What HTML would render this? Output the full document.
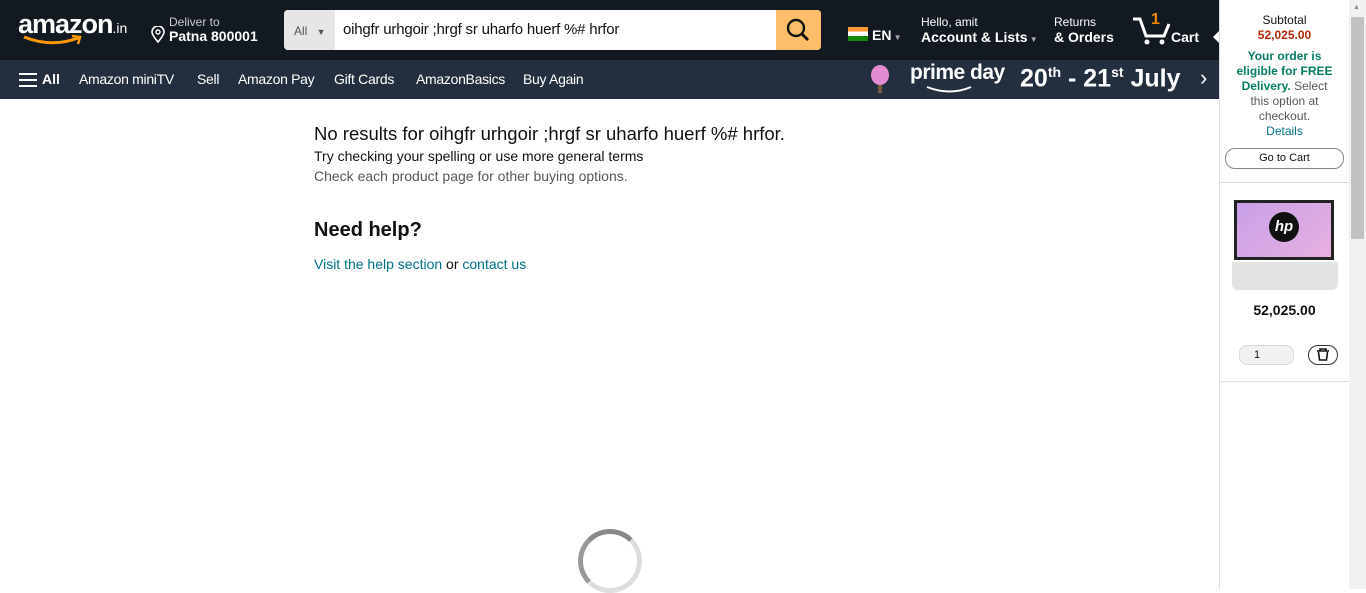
<!DOCTYPE html>
<html><head><meta charset="utf-8"><style>
*{box-sizing:border-box;margin:0;padding:0}
body{width:1366px;height:589px;overflow:hidden;font-family:"Liberation Sans",sans-serif;background:#fff;position:relative;color:#0f1111}
.top{position:absolute;left:0;top:0;width:1219px;height:60px;background:#131921;color:#fff}
.sub{position:absolute;left:0;top:60px;width:1219px;height:39px;background:#232f3e;color:#fff}
.a{position:absolute;white-space:nowrap}
.sm{font-size:12px}.bd{font-size:14px;font-weight:bold}
.nav span{position:absolute;top:11px;font-size:14px;font-weight:bold}
.nav span.n{font-weight:normal;letter-spacing:-0.3px}
.side{position:absolute;left:1219px;top:0;width:130px;height:589px;border-left:1px solid #ddd;background:#fff;text-align:center;font-size:12px}
.sb{position:absolute;left:1349px;top:0;width:17px;height:589px;background:#f1f1f1}
</style></head><body>
<div class="top">
 <div class="a" style="left:18px;top:9px;font-size:27px;font-weight:bold;letter-spacing:-1px">amazon<span style="font-size:14px;font-weight:normal;letter-spacing:0">.in</span></div>
 <svg class="a" style="left:22px;top:34px" width="62" height="14"><path d="M2 3 Q30 14 56 4" stroke="#ff9900" stroke-width="3" fill="none"/><path d="M50 2 L58 3 L56 10" stroke="#ff9900" stroke-width="2.5" fill="none"/></svg>
 <svg class="a" style="left:151px;top:26px" width="14" height="18"><path d="M7 16 C2 10 1 7 1 6 A6 6 0 0 1 13 6 C13 7 12 10 7 16Z" stroke="#fff" stroke-width="1.6" fill="none"/><circle cx="7" cy="6" r="2" stroke="#fff" stroke-width="1.4" fill="none"/></svg>
 <div class="a sm" style="left:169px;top:15px;color:#ccc">Deliver to</div>
 <div class="a bd" style="left:169px;top:28px">Patna 800001</div>
 <div class="a" style="left:284px;top:10px;width:537px;height:40px;background:#fff;border-radius:4px;overflow:hidden">
  <div class="a" style="left:0;top:0;width:51px;height:40px;background:#e6e6e6;color:#555;font-size:12px;padding:14px 0 0 10px">All <span style="font-size:9px;margin-left:6px">▼</span></div>
  <div class="a" style="left:59px;top:11px;font-size:15px;color:#111;letter-spacing:-0.2px">oihgfr urhgoir ;hrgf sr uharfo huerf %# hrfor</div>
  <div class="a" style="left:492px;top:0;width:45px;height:40px;background:#febd69"><svg width="45" height="40"><circle cx="20" cy="18" r="8" stroke="#111" stroke-width="2.4" fill="none"/><path d="M26 24 L32 30" stroke="#111" stroke-width="2.8"/></svg></div>
 </div>
 <div class="a" style="left:848px;top:27px;width:20px;height:14px;background:linear-gradient(#f93 0 33%,#fff 33% 66%,#138808 66%)"></div>
 <div class="a bd" style="left:872px;top:27px">EN<span style="font-size:8px;color:#aaa"> ▼</span></div>
 <div class="a sm" style="left:921px;top:15px">Hello, amit</div>
 <div class="a bd" style="left:921px;top:29px">Account &amp; Lists<span style="font-size:8px;color:#aaa"> ▼</span></div>
 <div class="a sm" style="left:1054px;top:15px">Returns</div>
 <div class="a bd" style="left:1054px;top:29px">&amp; Orders</div>
 <svg class="a" style="left:1132px;top:16px" width="40" height="30"><path d="M1 3 L8 3 L14 20 L32 20 L37 8" stroke="#fff" stroke-width="3" fill="none"/><circle cx="15" cy="26" r="2.5" fill="#fff"/><circle cx="30" cy="26" r="2.5" fill="#fff"/></svg>
 <div class="a" style="left:1151px;top:11px;color:#f08804;font-weight:bold;font-size:16px">1</div>
 <div class="a bd" style="left:1171px;top:29px">Cart</div>
 <div class="a" style="left:1207px;top:31px;width:0;height:0;border:6px solid transparent;border-right-color:#fff"></div>
</div>
<div class="sub nav">
 <svg class="a" style="left:19px;top:12px" width="20" height="16"><path d="M0 2H18M0 8H18M0 14H18" stroke="#fff" stroke-width="2"/></svg>
 <span style="left:42px">All</span>
 <span class="n" style="left:79px">Amazon miniTV</span>
 <span class="n" style="left:197px">Sell</span>
 <span class="n" style="left:238px">Amazon Pay</span>
 <span class="n" style="left:334px">Gift Cards</span>
 <span class="n" style="left:416px">AmazonBasics</span>
 <span class="n" style="left:523px">Buy Again</span>
 <div class="a" style="left:871px;top:5px;width:18px;height:20px;border-radius:50%;background:#e58bd3"></div>
 <div class="a" style="left:878px;top:25px;width:4px;height:8px;background:#7a5a3a"></div>
 <div class="a" style="left:910px;top:1px;font-size:21px;font-weight:bold;letter-spacing:-0.5px">prime day</div>
 <svg class="a" style="left:925px;top:24px" width="50" height="12"><path d="M2 3 Q25 12 46 3" stroke="#fff" stroke-width="2" fill="none"/></svg>
 <div class="a" style="left:1020px;top:4px;font-size:25px;font-weight:bold">20<sup style="font-size:14px">th</sup> - 21<sup style="font-size:14px">st</sup> July</div>
 <div class="a" style="left:1200px;top:5px;font-size:22px">›</div>
</div>
<div class="a" style="left:314px;top:123px;font-size:18.5px">No results for oihgfr urhgoir ;hrgf sr uharfo huerf %# hrfor.</div>
<div class="a" style="left:314px;top:148px;font-size:14px">Try checking your spelling or use more general terms</div>
<div class="a" style="left:314px;top:168px;font-size:14px;color:#565959">Check each product page for other buying options.</div>
<div class="a" style="left:314px;top:219px;font-size:20px;font-weight:bold">Need help?</div>
<div class="a" style="left:314px;top:256px;font-size:14px;color:#007185">Visit the help section <span style="color:#0f1111">or</span> contact us</div>
<div class="a" style="left:578px;top:529px;width:64px;height:64px;border-radius:50%;border:5px solid #ddd;border-top-color:#888;border-left-color:#999"></div>
<div class="side">
 <div style="margin-top:13px;font-size:12px;line-height:15px">Subtotal</div>
 <div style="color:#b12704;font-weight:bold;line-height:15px">52,025.00</div>
 <div style="margin-top:6px;color:#067d62;font-weight:bold;line-height:15px;padding:0 14px">Your order is eligible for FREE Delivery. <span style="color:#565959;font-weight:normal">Select this option at checkout.</span></div>
 <div style="color:#007185;line-height:15px">Details</div>
 <div style="margin:9px auto 0;width:119px;height:21px;border:1px solid #888;border-radius:10px;font-size:11px;line-height:19px">Go to Cart</div>
 <div style="position:absolute;left:0;top:182px;width:129px;border-top:1px solid #ddd"></div>
 <div style="position:absolute;left:12px;top:200px;width:106px;height:90px">
  <div style="position:absolute;left:2px;top:0;width:100px;height:60px;background:linear-gradient(135deg,#c8a0e8,#e8b0e0);border:3px solid #222"></div>
  <div style="position:absolute;left:37px;top:12px;width:30px;height:30px;border-radius:50%;background:#111;color:#fff;font-weight:bold;font-style:italic;font-size:15px;line-height:30px">hp</div>
  <div style="position:absolute;left:0;top:62px;width:106px;height:28px;background:#e3e3e3;border-radius:0 0 6px 6px"></div>
 </div>
 <div style="position:absolute;left:0;top:302px;width:129px;font-size:14px;font-weight:bold">52,025.00</div>
 <div style="position:absolute;left:19px;top:345px;width:55px;height:20px;background:#f0f2f2;border:1px solid #d5d9d9;border-radius:8px;text-align:left;padding-left:14px;line-height:18px;font-size:11px">1</div>
 <div style="position:absolute;left:88px;top:345px;width:30px;height:20px;border:1px solid #333;border-radius:10px"><svg width="28" height="18"><path d="M8 5H20M11 5V3H17V5M9.5 6L10.5 14H17.5L18.5 6" stroke="#111" stroke-width="1.6" fill="none"/></svg></div>
 <div style="position:absolute;left:0;top:381px;width:129px;border-top:1px solid #ddd"></div>
</div>
<div class="sb"><div style="position:absolute;left:2px;top:17px;width:13px;height:222px;background:#c1c1c1"></div><div style="position:absolute;left:4px;top:4px;font-size:7px;color:#888">▲</div></div>
</body></html>
